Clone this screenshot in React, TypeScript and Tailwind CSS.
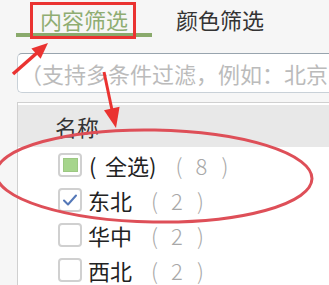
import React from "react";

const font = { fontFamily: '"Noto Sans CJK SC", "Noto Sans", sans-serif' };

function Box({ state }: { state: "partial" | "checked" | "none" }) {
  return (
    <div className="w-[24px] h-[24px] shrink-0 rounded-[4px] border-2 border-[#d0d0d0] bg-white flex items-center justify-center">
      {state === "partial" && (
        <div className="w-[15px] h-[14px] bg-[#a6d58c] border border-[#9cc882]" />
      )}
      {state === "checked" && (
        <svg width="16" height="14" viewBox="0 0 16 14">
          <path d="M2 7.5 L6 11.5 L14 2.5" fill="none" stroke="#5478b8" strokeWidth="2" strokeLinecap="round" strokeLinejoin="round" />
        </svg>
      )}
    </div>
  );
}

function Count({ n }: { n: string }) {
  return (
    <span className="ml-[19px] flex text-[22px] leading-[26px] text-[#a8a8a8] font-light">
      <span className="w-[20px]">(</span>
      <span className="w-[26px]">{n}</span>
      <span>)</span>
    </span>
  );
}

function Row({ state, name, count }: { state: "partial" | "checked" | "none"; name: React.ReactNode; count: string }) {
  return (
    <div className="h-[35px] flex items-center pl-[40px]">
      <Box state={state} />
      <span className="ml-[6px] flex text-[22px] leading-[26px] text-[#222]">{name}</span>
      <Count n={count} />
    </div>
  );
}

export default function App() {
  return (
    <div className="relative w-[329px] h-[285px] overflow-hidden bg-[#f6f6f6]" style={font}>
      <div className="flex pt-[6px] pl-[16px]">
        <div className="w-[136px] h-[31px] border-b-4 border-[#8aaa6c] text-center text-[22px] leading-[27px] text-[#8fad72]">
          内容筛选
        </div>
        <div className="w-[136px] h-[31px] text-center text-[22px] leading-[27px] text-[#333]">
          颜色筛选
        </div>
      </div>
      <div className="ml-[17px] mt-[16px] h-[40px] rounded-l-[5px] border border-r-0 border-[#c9d1d8] border-t-[#98a4ae] bg-white flex items-center pl-[2px] overflow-hidden">
        <span className="text-[22px] leading-[26px] text-[#bbbbbb] whitespace-nowrap">（支持多条件过滤，例如：北京</span>
      </div>
      <div className="ml-[17px] mt-[9px] border-l border-t border-[#d0d0d0] bg-white h-[200px]">
        <div className="mt-[2px] h-[42px] bg-[#e8e8e8] flex items-center pl-[37px]">
          <span className="text-[22px] leading-[26px] text-[#333]">名称</span>
        </div>
        <Row
          state="partial"
          name={
            <>
              <span className="w-[17px] pl-[1px]">(</span>
              <span>全选</span>
              <span>)</span>
            </>
          }
          count="8"
        />
        <Row state="checked" name="东北" count="2" />
        <Row state="none" name="华中" count="2" />
        <Row state="none" name="西北" count="2" />
      </div>
      <svg className="absolute left-0 top-0 pointer-events-none" width="329" height="285" viewBox="0 0 329 285">
        <rect x="31.5" y="3.5" width="103" height="34" fill="none" stroke="#ea3331" strokeWidth="3" />
        <line x1="13" y1="74" x2="38" y2="52" stroke="#ea3331" strokeWidth="3.5" />
        <polygon points="48,43 31.4,48.4 40.6,58.8" fill="#ea3331" />
        <line x1="104" y1="72" x2="112" y2="110" stroke="#ea3331" strokeWidth="3" />
        <polygon points="116,128 104,110.2 119.6,106.8" fill="#ea3331" />
        <ellipse cx="154" cy="176" rx="158" ry="46" transform="rotate(1 154 176)" fill="none" stroke="#de4f58" strokeWidth="3" />
      </svg>
    </div>
  );
}
